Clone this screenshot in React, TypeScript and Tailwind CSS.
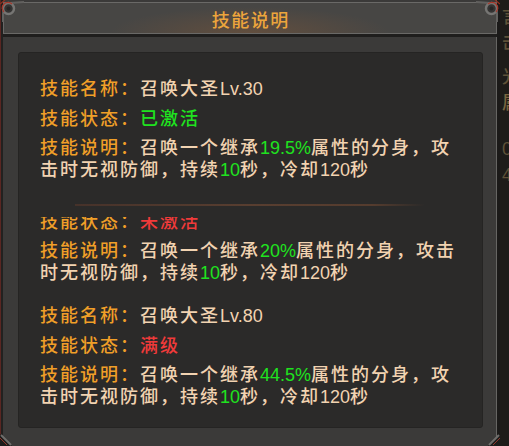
import React from "react";

const G = ({ children }: { children: React.ReactNode }) => (
  <span className="text-[#1fe31f] tracking-normal">{children}</span>
);
const L = ({ children }: { children: React.ReactNode }) => (
  <span className="tracking-normal">{children}</span>
);
const Label = ({ children }: { children: React.ReactNode }) => (
  <span className="text-[#f09f28]">{children}</span>
);

function Row({ label, children }: { label: string; children: React.ReactNode }) {
  return (
    <div className="h-[30px] leading-[30px] whitespace-nowrap">
      <Label>{label}</Label>
      {children}
    </div>
  );
}

function Desc({ first, second }: { first: React.ReactNode; second: React.ReactNode }) {
  return (
    <div className="mt-[3px] leading-[22px] whitespace-nowrap">
      <div>
        <Label>技能说明：</Label>
        {first}
      </div>
      <div>{second}</div>
    </div>
  );
}

function Corner({ flip }: { flip?: boolean }) {
  return (
    <svg
      width="24"
      height="22"
      viewBox="0 0 24 22"
      className={flip ? "absolute top-0 right-0 -scale-x-100" : "absolute top-0 left-0"}
    >
      <path d="M3 22 L3 13 Q4 6 10 3 L24 2" fill="none" stroke="#62615f" strokeWidth="2" />
      <circle cx="8.5" cy="8.5" r="5.5" fill="#353433" stroke="#767573" strokeWidth="2.5" />
      <path d="M4 12 A5.5 5.5 0 0 1 12 4" fill="none" stroke="#a8372a" strokeWidth="1.2" />
      <path d="M0 4 L5 0" stroke="#93301f" strokeWidth="1.2" />
      <circle cx="8.5" cy="8.5" r="2" fill="#262524" />
    </svg>
  );
}

function BottomCorner({ flip }: { flip?: boolean }) {
  return (
    <svg
      width="12"
      height="12"
      viewBox="0 0 12 12"
      className={flip ? "absolute bottom-0 right-0 -scale-x-100" : "absolute bottom-0 left-0"}
    >
      <path d="M0 0 L0 12 L12 12 Z" fill="#1d1c1b" />
      <path d="M1 1 L11 11" stroke="#6f6e6c" strokeWidth="2" />
      <path d="M0 4 L7 11" stroke="#8f362a" strokeWidth="1" />
    </svg>
  );
}

export default function App() {
  return (
    <div className="flex w-[509px] h-[446px] overflow-hidden bg-[#1e1c19] font-['Liberation_Sans','Noto_Sans_CJK_SC',sans-serif] font-medium text-[18px] tracking-[2px] text-[#f2d3b1]">
      <div className="relative flex flex-col w-[500px] h-full bg-[#3b3a39] shadow-[inset_1px_0_0_#5a2622,inset_3px_0_0_#222120,inset_-3px_0_0_#1b1a19,inset_-4px_0_0_#666563]">
        <div className="mx-[3px] mt-[2px] h-[32px] pt-[6px] flex items-center justify-center border border-[#6a6967] bg-[#474644] bg-[image:radial-gradient(ellipse_140px_26px_at_50%_100%,rgba(130,88,55,0.45),transparent)]">
          <span className="text-[#eda53c] tracking-[1.5px] pl-[1.5px]">技能说明</span>
        </div>
        <div className="mx-[3px] h-[3px] bg-[#1f1e1d]" />
        <div className="pl-[18px] pr-[17px] pt-[15px]">
          <div className="h-[376px] rounded-[3px] bg-[#2b2a29] border border-[#252423] pl-[21px] pt-[21px]">
            <div>
              <Row label="技能名称：">
                召唤大圣<L>Lv.30</L>
              </Row>
              <Row label="技能状态：">
                <span className="text-[#1fe31f]">已激活</span>
              </Row>
              <Desc
                first={
                  <>
                    召唤一个继承<G>19.5%</G>属性的分身，攻
                  </>
                }
                second={
                  <>
                    击时无视防御，持续<G>10</G>秒，冷却<L>120</L>秒
                  </>
                }
              />
            </div>
            <div className="mt-[23px] ml-[35px] w-[350px] h-[2px] bg-[linear-gradient(90deg,#46322a,#583e30_50%,#553c2e_85%,transparent)]" />
            <div className="mt-[11px] h-[67px] overflow-hidden">
              <div className="-mt-[10px]">
                <Row label="技能状态：">
                  <span className="text-[#f03a3a]">未激活</span>
                </Row>
                <Desc
                  first={
                    <>
                      召唤一个继承<G>20%</G>属性的分身，攻击
                    </>
                  }
                  second={
                    <>
                      时无视防御，持续<G>10</G>秒，冷却<L>120</L>秒
                    </>
                  }
                />
              </div>
            </div>
            <div className="mt-[17px]">
              <Row label="技能名称：">
                召唤大圣<L>Lv.80</L>
              </Row>
              <Row label="技能状态：">
                <span className="text-[#f03a3a]">满级</span>
              </Row>
              <Desc
                first={
                  <>
                    召唤一个继承<G>44.5%</G>属性的分身，攻
                  </>
                }
                second={
                  <>
                    击时无视防御，持续<G>10</G>秒，冷却<L>120</L>秒
                  </>
                }
              />
            </div>
          </div>
        </div>
        <Corner />
        <Corner flip />
        <BottomCorner />
        <BottomCorner flip />
      </div>
      <div className="w-[9px] h-full overflow-hidden text-[#5f5238] leading-[26px] pl-[2px] pt-[4px]">
        <div>言</div>
        <div>击</div>
        <div className="mt-[8px]">光</div>
        <div className="text-[#7a6640]">属</div>
        <div className="mt-[20px]">0</div>
        <div>4</div>
      </div>
    </div>
  );
}
